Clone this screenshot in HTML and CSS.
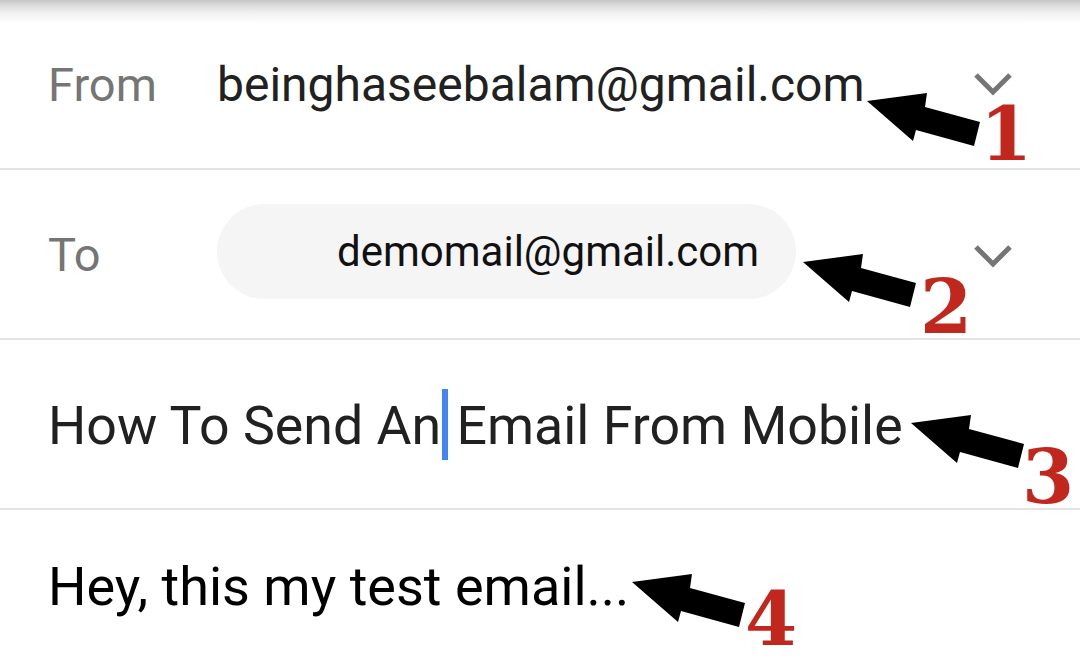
FILE: index.html
```html
<!DOCTYPE html>
<html>
<head>
<meta charset="utf-8">
<link rel="stylesheet" href="styles.css">
</head>
<body>
<div class="compose">
  <div class="row row-from">
    <span class="label">From</span>
    <span class="value">beinghaseebalam@gmail.com</span>
    <svg class="chev" viewBox="0 0 40 24" width="40" height="24"><polyline points="3,3 20,20 37,3" fill="none" stroke="#757575" stroke-width="5"/></svg>
  </div>
  <div class="row row-to">
    <span class="label">To</span>
    <span class="chip">demomail@gmail.com</span>
    <svg class="chev" viewBox="0 0 40 24" width="40" height="24"><polyline points="3,3 20,20 37,3" fill="none" stroke="#757575" stroke-width="5"/></svg>
  </div>
  <div class="row row-subject">
    <span class="subject">How To Send An<span class="cursor"></span> Email From Mobile</span>
  </div>
  <div class="row row-body">
    <span class="body-text">Hey, this my test email...</span>
  </div>
</div>

<div class="anno a1">
  <svg class="arrow" viewBox="0 -10 116 58" width="116" height="58"><polygon points="0,0 60,-8 58,6 113,21 107,45 49,29 46,40" fill="#000"/></svg>
  <span class="num">1</span>
</div>
<div class="anno a2">
  <svg class="arrow" viewBox="0 -10 116 58" width="116" height="58"><polygon points="0,0 60,-8 58,6 113,21 107,45 49,29 46,40" fill="#000"/></svg>
  <span class="num">2</span>
</div>
<div class="anno a3">
  <svg class="arrow" viewBox="0 -10 116 58" width="116" height="58"><polygon points="0,0 60,-8 58,6 113,21 107,45 49,29 46,40" fill="#000"/></svg>
  <span class="num">3</span>
</div>
<div class="anno a4">
  <svg class="arrow" viewBox="0 -10 116 58" width="116" height="58"><polygon points="0,0 60,-8 58,6 113,21 107,45 49,29 46,40" fill="#000"/></svg>
  <span class="num">4</span>
</div>
</body>
</html>
```

FILE: styles.css
```css
html, body {
  margin: 0;
  padding: 0;
  background: #fff;
}
body {
  width: 1080px;
  height: 662px;
  overflow: hidden;
  position: relative;
  font-family: Roboto, "Noto Sans", sans-serif;
}
.compose {
  display: flex;
  flex-direction: column;
}
.row {
  height: 168px;
  display: flex;
  align-items: center;
  padding: 0 50px 0 48px;
  border-bottom: 2px solid #e3e3e3;
  box-sizing: content-box;
}
.row-from {
  background: linear-gradient(to bottom, #c6c6c6 0px, #dedede 6px, #f3f3f3 14px, #fff 24px);
}
.row-body {
  border-bottom: none;
  height: 152px;
}
.label {
  width: 169px;
  flex: none;
  font-size: 47px;
  color: #757575;
}
.value {
  font-size: 48px;
  color: #212121;
  flex: 1;
}
.chip {
  width: 579px;
  box-sizing: border-box;
  height: 95px;
  border-radius: 48px;
  background: #f5f5f5;
  display: flex;
  align-items: center;
  padding-left: 120px;
  font-size: 42px;
  color: #111;
  margin-top: -6px;
}
.chev {
  margin-left: auto;
  margin-right: 17px;
  flex: none;
}
.row-from .chev {
  margin-top: 0;
}
.row-to .chev {
  margin-top: 4px;
}
.subject {
  font-size: 53.7px;
  color: #212121;
}
.cursor {
  display: inline-block;
  width: 6px;
  height: 71px;
  background: #4285f4;
  vertical-align: -16px;
  margin: 0 -5px 0 1px;
}
.body-text {
  font-size: 54px;
  color: #000;
}
.anno {
  position: absolute;
  width: 0;
  height: 0;
}
.arrow {
  position: absolute;
  left: 0;
  top: -10px;
}
.num {
  position: absolute;
  font-family: "DejaVu Serif", "Liberation Serif", serif;
  font-weight: bold;
  font-size: 75px;
  line-height: 1;
  color: #c1271d;
}
.a1 { left: 867px; top: 101px; }
.a1 .num { left: 113px; top: -4px; }
.a2 { left: 803px; top: 262px; }
.a2 .num { left: 117px; top: 8px; }
.a3 { left: 911px; top: 423px; }
.a3 .num { left: 111px; top: 17px; }
.a4 { left: 632px; top: 582px; }
.a4 .num { left: 113px; top: 0px; }
```
